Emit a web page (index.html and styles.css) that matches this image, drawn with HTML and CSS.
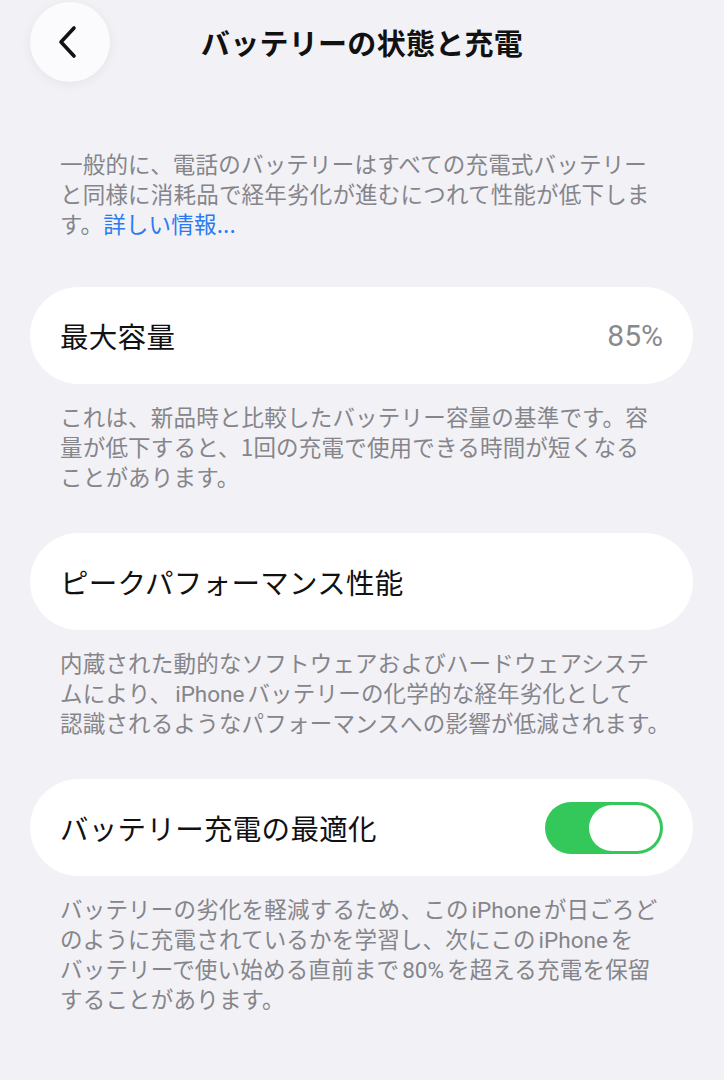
FILE: index.html
```html
<!DOCTYPE html>
<html lang="ja">
<head>
<meta charset="utf-8">
<link rel="stylesheet" href="styles.css">
</head>
<body>
<div class="screen">
  <header class="nav">
    <button class="back" aria-label="戻る">
      <svg width="26" height="34" viewBox="0 0 26 34"><path d="M19 3 L6 17 L19 31" fill="none" stroke="#111" stroke-width="3.6" stroke-linecap="round" stroke-linejoin="round"/></svg>
    </button>
    <h1 class="title">バッテリーの状態と充電</h1>
    <div class="spacer"></div>
  </header>

  <p class="note intro">一般的に、電話のバッテリーはすべての充電式バッテリー<br>と同様に消耗品で経年劣化が進むにつれて性能が低下しま<br>す。<a class="link">詳しい情報...</a></p>

  <div class="card">
    <span class="label">最大容量</span>
    <span class="value">85%</span>
  </div>
  <p class="note">これは、新品時と比較したバッテリー容量の基準です。容<br>量が低下すると、1回の充電で使用できる時間が短くなる<br>ことがあります。</p>

  <div class="card">
    <span class="label">ピークパフォーマンス性能</span>
  </div>
  <p class="note">内蔵された動的なソフトウェアおよびハードウェアシステ<br>ムにより、<span class="latin">iPhone</span>バッテリーの化学的な経年劣化として<br>認識されるようなパフォーマンスへの影響が低減されます。</p>

  <div class="card">
    <span class="label">バッテリー充電の最適化</span>
    <span class="toggle"><span class="knob"></span></span>
  </div>
  <p class="note">バッテリーの劣化を軽減するため、この<span class="latin">iPhone</span>が日ごろど<br>のように充電されているかを学習し、次にこの<span class="latin">iPhone</span>を<br>バッテリーで使い始める直前まで<span class="latin">80%</span>を超える充電を保留<br>することがあります。</p>
</div>
</body>
</html>
```

FILE: styles.css
```css
html, body {
  margin: 0;
  padding: 0;
  background: #f2f1f6;
}
body {
  font-family: "Noto Sans CJK JP", "Noto Sans", sans-serif;
  width: 724px;
  height: 1080px;
  overflow: hidden;
}
.screen {
  display: flex;
  flex-direction: column;
}
.nav {
  display: grid;
  grid-template-columns: 110px 1fr 110px;
  align-items: center;
  height: 84px;
}
.back {
  margin-left: 30px;
  width: 80px;
  height: 80px;
  border: none;
  border-radius: 50%;
  background: #fbfbfd;
  box-shadow: 0 2px 12px rgba(0,0,0,0.06);
  display: flex;
  align-items: center;
  justify-content: center;
  padding: 0 4px 0 0;
}
.title {
  margin: 0;
  text-align: center;
  font-size: 29px;
  font-weight: 700;
  color: #111;
  letter-spacing: 0.3px;
}
.note {
  margin: 0;
  padding: 0 20px 0 60px;
  font-size: 22.5px;
  line-height: 30px;
  color: #85858a;
  letter-spacing: 0.2px;
  white-space: nowrap;
}
.latin {
  font-family: "Roboto", "Noto Sans CJK JP", sans-serif;
  margin: 0 3px;
  letter-spacing: 0;
  line-height: 1;
}
.intro {
  margin-top: 64px;
  margin-bottom: 49px;
}
.link {
  color: #2a7bf0;
}
.card {
  margin: 0 31px 0 30px;
  height: 97px;
  border-radius: 49px;
  background: #fff;
  display: flex;
  align-items: center;
  justify-content: space-between;
  padding: 0 30px 0 30px;
  margin-bottom: 17px;
}
.label {
  font-size: 28.5px;
  color: #111;
  letter-spacing: 0.3px;
}
.value {
  font-family: "Roboto", sans-serif;
  font-size: 30px;
  line-height: 1;
  color: #8a8a8e;
}
.card + .note {
  margin-bottom: 42px;
}
.toggle {
  width: 118px;
  height: 52px;
  border-radius: 26px;
  background: #34c759;
  display: flex;
  align-items: center;
  justify-content: flex-end;
  padding: 0 3px;
  box-sizing: border-box;
}
.knob {
  width: 71px;
  height: 46px;
  border-radius: 23px;
  background: #fff;
}
```
